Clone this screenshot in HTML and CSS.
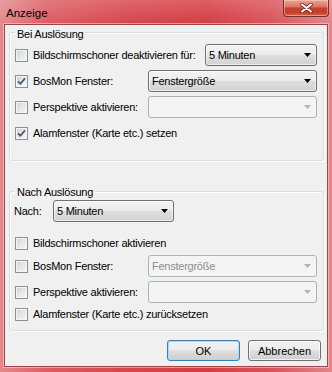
FILE: index.html
```
<!DOCTYPE html>
<html lang="de">
<head>
<meta charset="utf-8">
<title>Anzeige</title>
<link rel="stylesheet" href="styles.css">
</head>
<body>
<div class="window">
  <div class="titlebar">
    <span class="title">Anzeige</span>
    <div class="close">
      <svg width="13" height="10" viewBox="0 0 13 10">
        <path d="M2 1.5 L11 8.5 M11 1.5 L2 8.5" stroke="#6a3030" stroke-width="3.6" stroke-linecap="round" fill="none"/>
        <path d="M2 1.5 L11 8.5 M11 1.5 L2 8.5" stroke="#ffffff" stroke-width="2" stroke-linecap="round" fill="none"/>
      </svg>
    </div>
  </div>
  <div class="client">
    <div class="group g1">
      <div class="legend">Bei Auslösung</div>
      <div class="row">
        <span class="box"></span><span class="label">Bildschirmschoner deaktivieren für:</span>
        <div class="combo w-short"><span class="ctext">5 Minuten</span><svg class="arrow" width="7" height="4" viewBox="0 0 7 4"><path d="M0 0 H7 L3.5 4 Z" fill="#000"/></svg></div>
      </div>
      <div class="row">
        <span class="box"><svg width="11" height="11" viewBox="0 0 11 11"><path d="M2 5.3 L4.4 7.8 L9 2.4" stroke="#45557a" stroke-width="1.7" fill="none"/></svg></span><span class="label">BosMon Fenster:</span>
        <div class="combo w-long"><span class="ctext">Fenstergröße</span><svg class="arrow" width="7" height="4" viewBox="0 0 7 4"><path d="M0 0 H7 L3.5 4 Z" fill="#000"/></svg></div>
      </div>
      <div class="row">
        <span class="box"></span><span class="label">Perspektive aktivieren:</span>
        <div class="combo w-long disabled"><span class="ctext"></span><svg class="arrow" width="7" height="4" viewBox="0 0 7 4"><path d="M0 0 H7 L3.5 4 Z" fill="#b4b4b4"/></svg></div>
      </div>
      <div class="row">
        <span class="box"><svg width="11" height="11" viewBox="0 0 11 11"><path d="M2 5.3 L4.4 7.8 L9 2.4" stroke="#45557a" stroke-width="1.7" fill="none"/></svg></span><span class="label">Alamfenster (Karte etc.) setzen</span>
      </div>
    </div>

    <div class="group g2">
      <div class="legend">Nach Auslösung</div>
      <div class="row">
        <span class="nach">Nach:</span>
        <div class="combo w-mid"><span class="ctext">5 Minuten</span><svg class="arrow" width="7" height="4" viewBox="0 0 7 4"><path d="M0 0 H7 L3.5 4 Z" fill="#000"/></svg></div>
      </div>
      <div class="row sp10">
        <span class="box"></span><span class="label">Bildschirmschoner aktivieren</span>
      </div>
      <div class="row sp1">
        <span class="box"></span><span class="label">BosMon Fenster:</span>
        <div class="combo w-long disabled"><span class="ctext">Fenstergröße</span><svg class="arrow" width="7" height="4" viewBox="0 0 7 4"><path d="M0 0 H7 L3.5 4 Z" fill="#b4b4b4"/></svg></div>
      </div>
      <div class="row sp4">
        <span class="box"></span><span class="label">Perspektive aktivieren:</span>
        <div class="combo w-long disabled"><span class="ctext"></span><svg class="arrow" width="7" height="4" viewBox="0 0 7 4"><path d="M0 0 H7 L3.5 4 Z" fill="#b4b4b4"/></svg></div>
      </div>
      <div class="row">
        <span class="box"></span><span class="label">Alamfenster (Karte etc.) zurücksetzen</span>
      </div>
    </div>

    <div class="buttons">
      <div class="btn default">OK</div>
      <div class="btn">Abbrechen</div>
    </div>
  </div>
</div>
</body>
</html>
```
FILE: styles.css
```
html, body {
  margin: 0;
  padding: 0;
}
body {
  width: 332px;
  height: 372px;
  overflow: hidden;
  font-family: "Liberation Sans", Arial, sans-serif;
  font-size: 11px;
  letter-spacing: -0.25px;
  color: #000;
}
.window {
  width: 332px;
  height: 372px;
  display: flex;
  flex-direction: column;
  box-sizing: border-box;
  background:
    linear-gradient(180deg, rgba(255,255,255,0.18) 0px, rgba(255,255,255,0) 24px),
    linear-gradient(90deg, #e4898c 0%, #dc5c61 14%, #d6464c 38%, #d53c43 62%, #d9535a 82%, #e2868a 100%);
}
.titlebar {
  height: 24px;
  flex: none;
  display: flex;
  align-items: flex-start;
}
.title {
  margin: 6px 0 0 6px;
  font-size: 11.5px;
  line-height: 14px;
  letter-spacing: 0;
}
.close {
  margin-left: auto;
  margin-right: 3px;
  width: 46px;
  height: 17px;
  box-sizing: border-box;
  border: 1px solid #7a2e2e;
  border-top: none;
  border-radius: 0 0 4px 4px;
  background: linear-gradient(180deg, #eaa595 0%, #dc7767 40%, #c8402c 52%, #c6402a 80%, #dc6a4c 100%);
  box-shadow: inset 0 0 0 1px rgba(255,220,210,0.45);
  display: flex;
  align-items: center;
  justify-content: center;
}
.client {
  flex: 1;
  margin: 0 4px 5px 4px;
  border: 1px solid #9e4646;
  box-shadow: 0 0 0 1px rgba(255,215,215,0.55);
  background: #f0f0f0;
  padding: 0 3px 0 4px;
  display: flex;
  flex-direction: column;
}
.group {
  position: relative;
  border: 1px solid #d5dfe5;
  border-radius: 3px;
  box-shadow: inset 1px 1px 0 #ffffff, 1px 1px 0 #ffffff;
  padding: 0 6px 0 5px;
  display: flex;
  flex-direction: column;
}
.g1 {
  margin-top: 7px;
  padding-top: 11px;
  padding-bottom: 16px;
  gap: 4px;
}
.g2 {
  margin-top: 30px;
  padding-top: 8px;
  padding-bottom: 5px;
}
.legend {
  position: absolute;
  left: 5px;
  top: -5px;
  padding: 0 2px;
  line-height: 13px;
  background: #f0f0f0;
}
.g2 .legend {
  top: -6px;
}
.row {
  height: 22px;
  display: flex;
  align-items: center;
}
.sp10 { margin-top: 10px; }
.sp1 { margin-top: 1px; }
.sp4 { margin-top: 4px; }
.box {
  flex: none;
  width: 13px;
  height: 13px;
  box-sizing: border-box;
  border: 1px solid #8e8f8f;
  background: linear-gradient(135deg, #cdd0d4 0%, #e6e7e9 50%, #f8f8f8 100%);
  box-shadow: inset 0 0 0 1px #f5f5f5;
  margin-right: 5px;
  display: flex;
  align-items: center;
  justify-content: center;
}
.label {
  white-space: nowrap;
}
.nach {
  width: 39px;
  margin-left: -1px;
  flex: none;
}
.combo {
  flex: none;
  height: 22px;
  box-sizing: border-box;
  border: 1px solid #707070;
  border-radius: 3px;
  background: linear-gradient(180deg, #f3f3f3 0%, #ececec 48%, #dedede 52%, #d2d2d2 100%);
  box-shadow: inset 0 0 0 1px rgba(255,255,255,0.6);
  padding: 0 5px 0 3px;
  display: flex;
  align-items: center;
}
.row .combo.w-short,
.row .combo.w-long {
  margin-left: auto;
}
.w-short { width: 112px; }
.w-long { width: 169px; }
.w-mid { width: 121px; }
.ctext {
  white-space: nowrap;
}
.arrow {
  margin-left: auto;
  flex: none;
}
.combo.disabled {
  border-color: #adb2b5;
  background: #f4f4f4;
  box-shadow: none;
  color: #8d8d8d;
}
.buttons {
  display: flex;
  justify-content: flex-end;
  gap: 8px;
  margin-top: 9px;
  padding-right: 3px;
}
.btn {
  width: 73px;
  height: 21px;
  box-sizing: border-box;
  border: 1px solid #707070;
  border-radius: 3px;
  background: linear-gradient(180deg, #f2f2f2 0%, #ebebeb 48%, #dddddd 52%, #cfcfcf 100%);
  box-shadow: inset 0 0 0 1px rgba(255,255,255,0.7);
  display: flex;
  align-items: center;
  justify-content: center;
  letter-spacing: 0;
}
.btn.default {
  border-color: #3c7fb1;
  box-shadow: inset 0 0 0 1px #9fdcf6;
}
```
